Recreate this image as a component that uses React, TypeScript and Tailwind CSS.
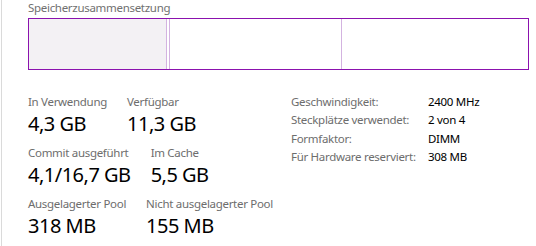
const stats = [
  [
    { label: 'In Verwendung', value: '4,3 GB' },
    { label: 'Verfügbar', value: '11,3 GB' },
  ],
  [
    { label: 'Commit ausgeführt', value: '4,1/16,7 GB' },
    { label: 'Im Cache', value: '5,5 GB' },
  ],
  [
    { label: 'Ausgelagerter Pool', value: '318 MB' },
    { label: 'Nicht ausgelagerter Pool', value: '155 MB' },
  ],
];

const specs = [
  ['Geschwindigkeit:', '2400 MHz'],
  ['Steckplätze verwendet:', '2 von 4'],
  ['Formfaktor:', 'DIMM'],
  ['Für Hardware reserviert:', '308 MB'],
];

export default function App() {
  return (
    <div className="w-[536px] h-[246px] bg-white overflow-hidden whitespace-nowrap font-['Noto_Sans',sans-serif]">
      <div className="ml-px h-full border-l border-[#dadada] pl-[26px] pr-[7px]">
        <div className="h-[18px] text-[11.5px] leading-[16px] tracking-[-0.3px] text-[#707070]">Speicherzusammensetzung</div>

        {/* Composition bar */}
        <div className="flex h-[52px] border border-[#8b12ae]">
          <div className="w-[137px] bg-[#f3f1f4]" />
          <div className="w-px bg-[#d3b3e0]" />
          <div className="w-[2px]" />
          <div className="w-px bg-[#d3b3e0]" />
          <div className="w-[171px]" />
          <div className="w-px bg-[#d3b3e0]" />
          <div className="flex-1" />
        </div>

        <div className="mt-[24px] flex items-start">
          <div className="w-[263px] flex flex-col gap-[7px]">
            {stats.map((row, i) => (
              <div key={i} className="flex gap-5">
                {row.map((s) => (
                  <div key={s.label} className="flex flex-col">
                    <span className="text-[11.5px] leading-[16px] tracking-[-0.3px] text-[#6d6d6d]">{s.label}</span>
                    <span className="text-[20px] leading-[28px] tracking-[-0.5px] text-black">{s.value}</span>
                  </div>
                ))}
              </div>
            ))}
          </div>

          <div className="-mt-px grid grid-cols-[137px_auto] text-[11.5px] leading-[18.3px] tracking-[-0.3px]">
            {specs.map(([k, v]) => (
              <div key={k} className="contents">
                <span className="text-[#6d6d6d]">{k}</span>
                <span className="text-black">{v}</span>
              </div>
            ))}
          </div>
        </div>
      </div>
    </div>
  );
}
